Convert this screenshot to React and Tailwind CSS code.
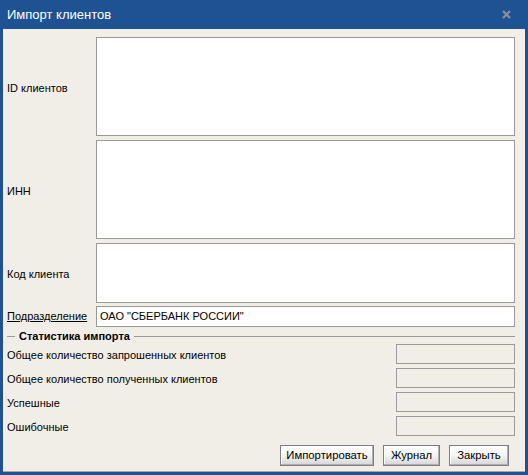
import React from "react";

const font = { fontFamily: '"Liberation Sans", Arial, sans-serif' };

function Btn({ children, w }) {
  return (
    <button
      className={`h-[21px] ${w} border border-[#7f7f7f] bg-gradient-to-b from-[#ffffff] via-[#f4f4f4] to-[#d6d6d6] text-[11.3px] text-black leading-none shadow-[inset_-1px_-1px_0_#b0b0b0,inset_1px_1px_0_#ffffff]`}
      style={font}
    >
      {children}
    </button>
  );
}

function StatRow({ label }) {
  return (
    <div className="flex items-center justify-between h-[20px]">
      <span className="text-[11px] text-black pt-[2px]">{label}</span>
      <div className="w-[119px] h-[20px] border border-[#9a9a9a] bg-[#f1eee8]" />
    </div>
  );
}

export default function App() {
  return (
    <div className="w-[528px] h-[475px] bg-[#1e5292] flex flex-col" style={font}>
      <div className="h-[29px] flex items-center justify-between pl-[7px] pr-[17px] shrink-0">
        <span className="text-white text-[13px] leading-none">Импорт клиентов</span>
        <svg width="9" height="9" viewBox="0 0 9 9">
          <path d="M1 1 L8 8 M8 1 L1 8" stroke="#8c8f94" strokeWidth="2.2" />
        </svg>
      </div>
      <div className="flex-1 mx-[3px] mb-[3px] bg-[#f1eee8] border-b border-[#a9a69c] flex flex-col pl-[4px] pr-[10px] pt-[8px]">
        <div className="flex h-[99px]">
          <div className="w-[89px] flex items-center pt-[4px] text-[11px] text-black">ID клиентов</div>
          <div className="flex-1 bg-white border border-[#9a9a9a]" />
        </div>
        <div className="flex h-[99px] mt-[4px]">
          <div className="w-[89px] flex items-center pt-[4px] text-[11px] text-black">ИНН</div>
          <div className="flex-1 bg-white border border-[#9a9a9a]" />
        </div>
        <div className="flex h-[60px] mt-[4px]">
          <div className="w-[89px] flex items-center pt-[2px] text-[11px] text-black">Код клиента</div>
          <div className="flex-1 bg-white border border-[#9a9a9a]" />
        </div>
        <div className="flex h-[21px] mt-[3px]">
          <div className="w-[89px] flex items-center text-[11px] text-black">
            <span className="underline">Подразделение</span>
          </div>
          <div className="flex-1 bg-white border border-[#9a9a9a] flex items-center pl-[3px] text-[11px] text-black">
            ОАО "СБЕРБАНК РОССИИ"
          </div>
        </div>
        <div className="flex items-center h-[14px] mt-[2px]">
          <div className="w-[8px] h-px bg-[#9a9a9a]" />
          <span className="px-[4px] text-[11px] font-bold text-black leading-none">Статистика импорта</span>
          <div className="flex-1 h-px bg-[#9a9a9a]" />
        </div>
        <div className="flex flex-col gap-[4px] mt-[1px]">
          <StatRow label="Общее количество запрошенных клиентов" />
          <StatRow label="Общее количество полученных клиентов" />
          <StatRow label="Успешные" />
          <StatRow label="Ошибочные" />
        </div>
        <div className="flex justify-end gap-[9px] mt-[9px] pr-[6px]">
          <Btn w="w-[94px]">Импортировать</Btn>
          <Btn w="w-[57px]">Журнал</Btn>
          <Btn w="w-[60px]">Закрыть</Btn>
        </div>
      </div>
    </div>
  );
}
